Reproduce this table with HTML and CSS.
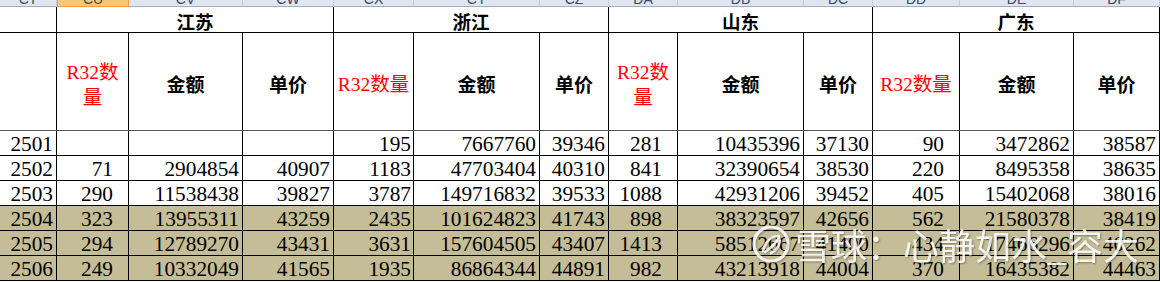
FILE: index.html
```html
<!DOCTYPE html>
<html lang="zh-CN">
<head>
<meta charset="utf-8">
<title>R32</title>
<link rel="stylesheet" href="styles.css">
</head>
<body>
<div class="page">
<div class="sheet">
  <div class="colhead"><span>CT</span></div>
  <div class="colhead sel"><span>CU</span></div>
  <div class="colhead"><span>CV</span></div>
  <div class="colhead"><span>CW</span></div>
  <div class="colhead"><span>CX</span></div>
  <div class="colhead"><span>CY</span></div>
  <div class="colhead"><span>CZ</span></div>
  <div class="colhead"><span>DA</span></div>
  <div class="colhead"><span>DB</span></div>
  <div class="colhead"><span>DC</span></div>
  <div class="colhead"><span>DD</span></div>
  <div class="colhead"><span>DE</span></div>
  <div class="colhead"><span>DF</span></div>

  <div class="c r1"></div>
  <div class="c r1 prov">江苏</div>
  <div class="c r1 prov">浙江</div>
  <div class="c r1 prov">山东</div>
  <div class="c r1 prov">广东</div>

  <div class="c r2"></div>
  <div class="c r2 red">R32数<br>量</div>
  <div class="c r2 hd">金额</div>
  <div class="c r2 hd">单价</div>
  <div class="c r2 red">R32数量</div>
  <div class="c r2 hd">金额</div>
  <div class="c r2 hd">单价</div>
  <div class="c r2 red">R32数<br>量</div>
  <div class="c r2 hd">金额</div>
  <div class="c r2 hd">单价</div>
  <div class="c r2 red">R32数量</div>
  <div class="c r2 hd">金额</div>
  <div class="c r2 hd">单价</div>

  <div class="c n">2501</div><div class="c n q"></div><div class="c n"></div><div class="c n"></div><div class="c n x">195</div><div class="c n">7667760</div><div class="c n">39346</div><div class="c n q">281</div><div class="c n">10435396</div><div class="c n">37130</div><div class="c n q">90</div><div class="c n">3472862</div><div class="c n">38587</div>

  <div class="c n">2502</div><div class="c n q">71</div><div class="c n">2904854</div><div class="c n">40907</div><div class="c n x">1183</div><div class="c n">47703404</div><div class="c n">40310</div><div class="c n q">841</div><div class="c n">32390654</div><div class="c n">38530</div><div class="c n q">220</div><div class="c n">8495358</div><div class="c n">38635</div>

  <div class="c n">2503</div><div class="c n q">290</div><div class="c n">11538438</div><div class="c n">39827</div><div class="c n x">3787</div><div class="c n">149716832</div><div class="c n">39533</div><div class="c n q">1088</div><div class="c n">42931206</div><div class="c n">39452</div><div class="c n q">405</div><div class="c n">15402068</div><div class="c n">38016</div>

  <div class="c n s">2504</div><div class="c n s q">323</div><div class="c n s">13955311</div><div class="c n s">43259</div><div class="c n s x">2435</div><div class="c n s">101624823</div><div class="c n s">41743</div><div class="c n s q">898</div><div class="c n s">38323597</div><div class="c n s">42656</div><div class="c n s q">562</div><div class="c n s">21580378</div><div class="c n s">38419</div>

  <div class="c n s">2505</div><div class="c n s q">294</div><div class="c n s">12789270</div><div class="c n s">43431</div><div class="c n s x">3631</div><div class="c n s">157604505</div><div class="c n s">43407</div><div class="c n s q">1413</div><div class="c n s">58512667</div><div class="c n s">41400</div><div class="c n s q">434</div><div class="c n s">17466296</div><div class="c n s">40262</div>

  <div class="c n s">2506</div><div class="c n s q">249</div><div class="c n s">10332049</div><div class="c n s">41565</div><div class="c n s x">1935</div><div class="c n s">86864344</div><div class="c n s">44891</div><div class="c n s q">982</div><div class="c n s">43213918</div><div class="c n s">44004</div><div class="c n s q">370</div><div class="c n s">16435382</div><div class="c n s">44463</div>
</div>

<div class="watermark">
  <svg class="wm-logo" width="40" height="40" viewBox="0 0 40 40" aria-hidden="true">
    <circle cx="20" cy="20" r="17" fill="none" stroke="#fff" stroke-width="3.2"/>
    <path d="M12 27 C 14 18, 20 12, 28 12 M 14 28 C 20 24, 24 20, 28 14 M 20 29 C 25 27, 28 22, 29 17" fill="none" stroke="#fff" stroke-width="2.6" stroke-linecap="round"/>
  </svg>
  <span class="wm-text">雪球：心静如水_容大</span>
</div>
</div>
</body>
</html>
```
FILE: styles.css
```css
html, body { margin: 0; padding: 0; background: #fff; }
body { width: 1160px; height: 282px; overflow: hidden; }
.page { position: relative; width: 1160px; height: 282px; overflow: hidden; }

.sheet {
  display: grid;
  grid-template-columns: 57px 72px 114px 91px 80px 126px 69px 69px 126px 69px 87px 114px 86px;
  grid-template-rows: 7px 26px 98px repeat(6, 25px);
}

.colhead {
  background: #dfe6ef;
  border-right: 1px solid #c3cfdd;
  border-bottom: 1px solid #9eb0c6;
  box-sizing: border-box;
  overflow: hidden;
  text-align: center;
}
.colhead span {
  display: block;
  margin-top: -8px;
  font: 14px/14px "Liberation Sans", sans-serif;
  color: #3b4a60;
}
.colhead.sel { background: #f5c777; border: 1px solid #f0a040; border-top: none; }

.c {
  box-sizing: border-box;
  border-right: 1px solid #000;
  border-bottom: 1px solid #000;
  font-family: "Liberation Serif", "Noto Sans CJK SC", serif;
  color: #000;
}

.prov {
  grid-column: span 3;
  display: flex;
  justify-content: center;
  align-items: center;
  padding-top: 2px;
  font-size: 18.5px;
  font-weight: bold;
}

.r2 {
  display: flex;
  justify-content: center;
  align-items: center;
  text-align: center;
  border-bottom-color: #555;
  padding-top: 3px;
}
.hd { font-size: 19px; font-weight: bold; }
.red { color: #ff0000; font-size: 19.5px; line-height: 25px; padding-top: 6px; }

.n {
  text-align: right;
  font-size: 21.3px;
  line-height: 22px;
  padding: 2px 3px 0 0;
  white-space: nowrap;
}
.n.q { padding-right: 15px; }
.n.x { padding-right: 2px; }
.s { background: #c4bd97; }

.watermark {
  position: absolute;
  left: 751px;
  top: 224px;
  display: flex;
  align-items: center;
  gap: 4px;
  opacity: 0.85;
  pointer-events: none;
}
.wm-logo { filter: drop-shadow(1px 1px 1px rgba(0,0,0,0.35)); }
.wm-text {
  font-family: "Noto Sans CJK SC", sans-serif;
  font-size: 36px;
  line-height: 40px;
  color: #fff;
  text-shadow: 1px 1px 2px rgba(0,0,0,0.4);
  white-space: nowrap;
}
```
